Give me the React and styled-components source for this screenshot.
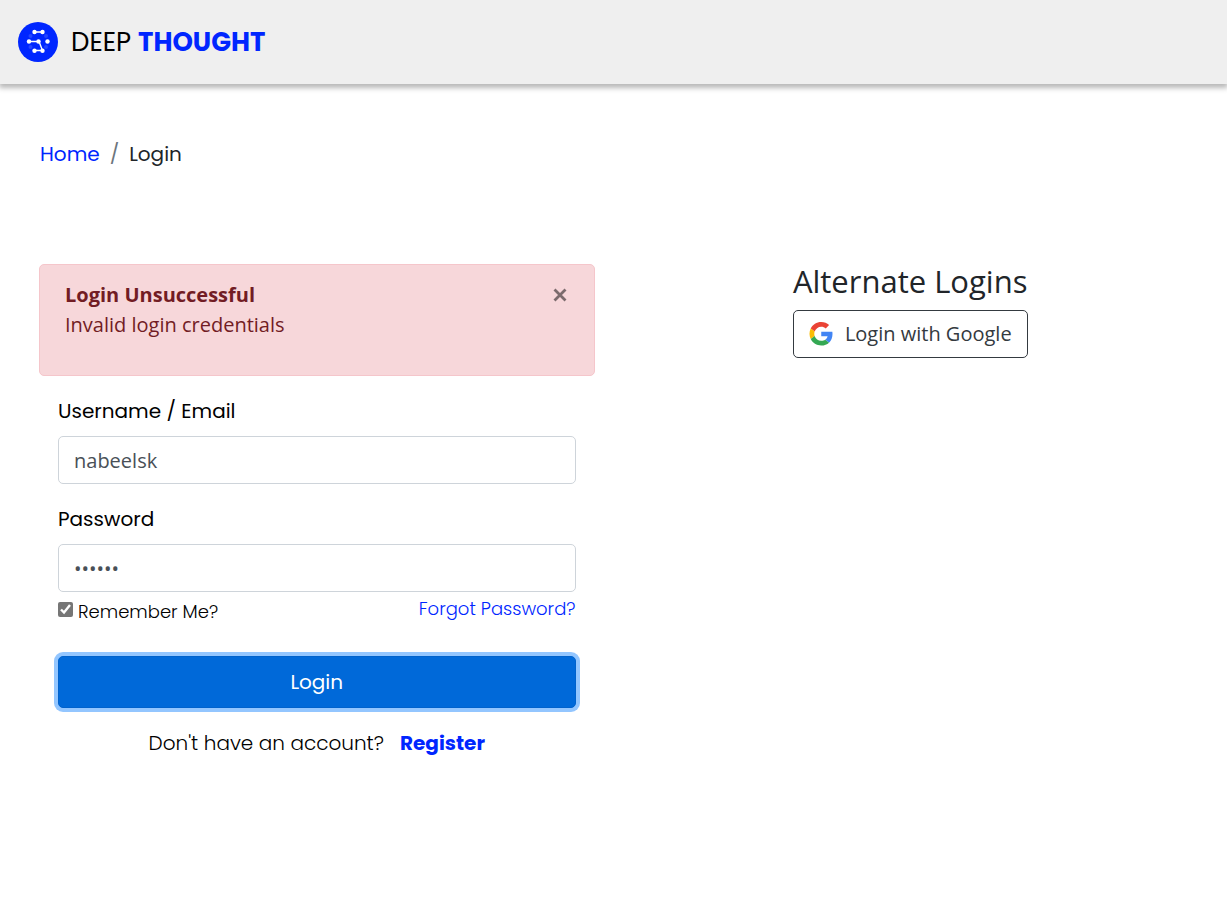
import React from "react";
import styled, { createGlobalStyle } from "styled-components";

const geometric = 'Poppins, Inter, "Open Sans", sans-serif';
const humanist = '"Open Sans", "Noto Sans", sans-serif';

const GlobalStyle = createGlobalStyle`
  *, *::before, *::after { box-sizing: border-box; }
  body {
    margin: 0;
    background: #fff;
    color: #212529;
    font-family: ${humanist};
    font-size: 20px;
    line-height: 30px;
  }
  button, input { font: inherit; }
`;

const Header = styled.header`
  display: flex;
  align-items: center;
  height: 84px;
  padding: 0 18px;
  background: #efefef;
  box-shadow: 0 3px 5px 1px rgba(0, 0, 0, 0.28);
`;

const Brand = styled.a`
  display: flex;
  align-items: center;
  gap: 13px;
  color: #000;
  font-family: ${geometric};
  font-size: 26px;
  font-weight: 400;
  text-decoration: none;
  strong {
    color: #0026ff;
    font-weight: 700;
  }
`;

const Link = styled.a`
  color: #0026ff;
  text-decoration: none;
  font-weight: ${(p) => (p.$bold ? 700 : "inherit")};
`;

const Breadcrumb = styled.nav`
  display: flex;
  gap: 10px;
  padding: 55px 40px 0;
  font-family: ${geometric};
  font-weight: 400;
`;

const Slash = styled.span`
  color: #6c757d;
`;

const Columns = styled.main`
  display: grid;
  grid-template-columns: 1fr 1fr;
  align-items: start;
  padding: 95px 20px 40px;
`;

const LoginColumn = styled.section`
  padding: 0 19px;
`;

const Alert = styled.div`
  display: flex;
  justify-content: space-between;
  align-items: flex-start;
  min-height: 112px;
  padding: 15px 25px;
  border: 1px solid #f5c6cb;
  border-radius: 5px;
  background: #f7d7da;
  color: #721c24;
  p { margin: 0; }
`;

const CloseButton = styled.button`
  display: flex;
  width: 18px;
  height: 30px;
  padding: 0;
  align-items: center;
  justify-content: center;
  border: 0;
  background: none;
  color: #7b6b6d;
`;

const Form = styled.form`
  display: flex;
  flex-direction: column;
  padding: 20px 19px 0;
  color: #000;
  font-family: ${geometric};
  font-weight: 400;
`;

const Field = styled.div`
  display: flex;
  flex-direction: column;
  gap: 10px;
  margin-bottom: ${(p) => (p.$last ? 3 : 20)}px;
`;

const TextInput = styled.input`
  width: 100%;
  height: 48px;
  padding: 0 15px;
  border: 1px solid #ced4da;
  border-radius: 5px;
  background: #fff;
  color: #495057;
  font-family: ${humanist};
  font-weight: 400;
  outline: 0;
`;

const Options = styled.div`
  display: flex;
  justify-content: space-between;
  align-items: flex-start;
  font-size: 18px;
  font-weight: 300;
  line-height: 28px;
`;

const Remember = styled.label`
  display: flex;
  align-items: center;
  gap: 5px;
  padding-top: 3px;
`;

const Checkbox = styled.input`
  width: 15px;
  height: 15px;
  margin: 0 0 5px;
  accent-color: #767676;
`;

const SubmitButton = styled.button`
  height: 52px;
  margin-top: 30px;
  border: 1px solid #0062cc;
  border-radius: 5px;
  background: #0069d9;
  color: #fff;
  font-weight: 400;
  box-shadow: 0 0 0 4px #93c6ff;
  outline: 0;
`;

const RegisterLine = styled.p`
  display: flex;
  justify-content: center;
  gap: 16px;
  margin: 20px 0 0;
  font-weight: 300;
`;

const Alternates = styled.section`
  justify-self: center;
`;

const Title = styled.h1`
  margin: 0 0 12px;
  font-size: 31px;
  font-weight: 400;
  line-height: 34px;
`;

const GoogleButton = styled.button`
  display: flex;
  align-items: center;
  gap: 12px;
  height: 48px;
  padding: 0 15px;
  border: 1px solid #343a40;
  border-radius: 5px;
  background: #fff;
  color: #343a40;
`;

function BrandMark() {
  return (
    <svg width="40" height="40" viewBox="0 0 40 40" aria-hidden="true">
      <circle cx="20" cy="20" r="20" fill="#0026ff" />
      <g fill="#2445ff">
        <circle cx="12.5" cy="14" r="2" />
        <circle cx="28" cy="14" r="2" />
        <circle cx="12.5" cy="25" r="2" />
        <circle cx="28" cy="25" r="2" />
      </g>
      <path d="M16.5 10h8M11 19.5h10l3.5 9h-8" fill="none" stroke="#fff" strokeWidth="1.4" />
      <g fill="#fff">
        <circle cx="16.5" cy="10" r="2.2" />
        <circle cx="24.5" cy="10" r="2.2" />
        <circle cx="11" cy="19.5" r="2.2" />
        <circle cx="20.5" cy="19.5" r="2.2" />
        <circle cx="29.5" cy="19.5" r="2.2" />
        <circle cx="16.5" cy="28.8" r="2.2" />
        <circle cx="24.5" cy="28.8" r="2.2" />
      </g>
    </svg>
  );
}

function GoogleMark() {
  return (
    <svg width="24" height="24" viewBox="-1 0 49 49" aria-hidden="true">
      <path fill="#EA4335" d="M24 9.5c3.54 0 6.71 1.22 9.21 3.6l6.85-6.85C35.9 2.38 30.47 0 24 0 14.62 0 6.51 5.38 2.56 13.22l7.98 6.19C12.43 13.72 17.74 9.5 24 9.5z" />
      <path fill="#4285F4" d="M46.98 24.55c0-1.57-.15-3.09-.38-4.55H24v9.02h12.94c-.58 2.96-2.26 5.48-4.78 7.18l7.73 6c4.51-4.18 7.09-10.36 7.09-17.65z" />
      <path fill="#FBBC05" d="M10.53 28.59c-.48-1.45-.76-2.99-.76-4.59s.27-3.14.76-4.59l-7.98-6.19C.92 16.46 0 20.12 0 24c0 3.88.92 7.54 2.56 10.78l7.97-6.19z" />
      <path fill="#34A853" d="M24 48c6.48 0 11.93-2.13 15.89-5.81l-7.73-6c-2.15 1.45-4.92 2.3-8.16 2.3-6.26 0-11.57-4.22-13.47-9.91l-7.98 6.19C6.51 42.62 14.62 48 24 48z" />
    </svg>
  );
}

export default function App() {
  return (
    <>
      <GlobalStyle />
      <Header>
        <Brand href="#home">
          <BrandMark />
          <span>DEEP <strong>THOUGHT</strong></span>
        </Brand>
      </Header>
      <Breadcrumb aria-label="Breadcrumb">
        <Link href="#home">Home</Link>
        <Slash>/</Slash>
        <span aria-current="page">Login</span>
      </Breadcrumb>
      <Columns>
        <LoginColumn>
          <Alert role="alert">
            <div>
              <strong>Login Unsuccessful</strong>
              <p>Invalid login credentials</p>
            </div>
            <CloseButton type="button" aria-label="Close">
              <svg width="14" height="14" viewBox="0 0 14 14" aria-hidden="true">
                <path d="M1.5 1.5l11 11M12.5 1.5l-11 11" stroke="currentColor" strokeWidth="2.8" />
              </svg>
            </CloseButton>
          </Alert>
          <Form onSubmit={(e) => e.preventDefault()}>
            <Field>
              <label htmlFor="username">Username / Email</label>
              <TextInput id="username" type="text" defaultValue="nabeelsk" />
            </Field>
            <Field $last>
              <label htmlFor="password">Password</label>
              <TextInput id="password" type="password" defaultValue="secret" />
            </Field>
            <Options>
              <Remember>
                <Checkbox type="checkbox" defaultChecked />
                Remember Me?
              </Remember>
              <Link href="#forgot">Forgot Password?</Link>
            </Options>
            <SubmitButton type="submit">Login</SubmitButton>
            <RegisterLine>
              <span>Don't have an account?</span>
              <Link href="#register" $bold>Register</Link>
            </RegisterLine>
          </Form>
        </LoginColumn>
        <Alternates>
          <Title>Alternate Logins</Title>
          <GoogleButton type="button">
            <GoogleMark />
            Login with Google
          </GoogleButton>
        </Alternates>
      </Columns>
    </>
  );
}
